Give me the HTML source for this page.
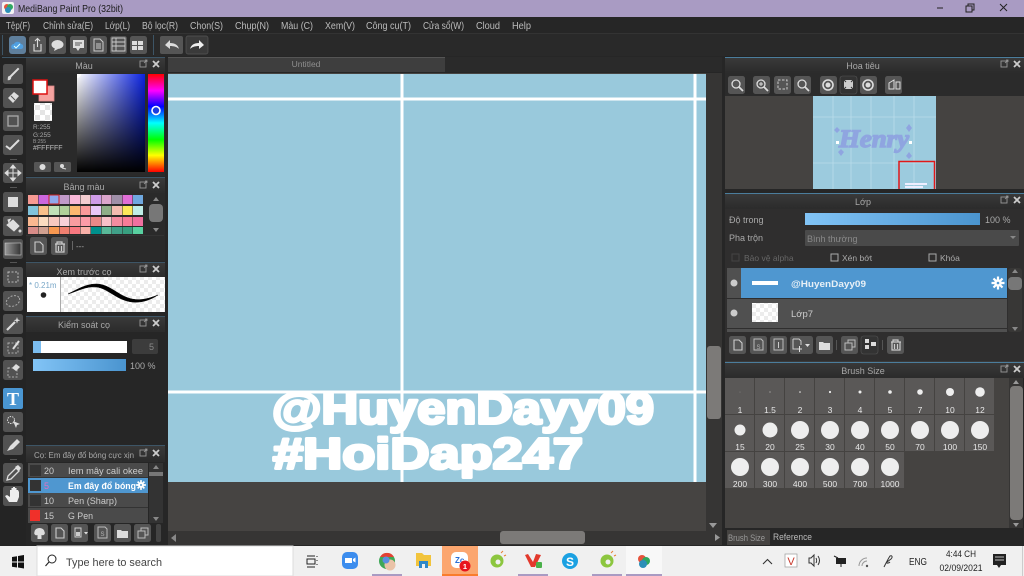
<!DOCTYPE html>
<html lang="vi"><head><meta charset="utf-8"><title>MediBang Paint Pro</title>
<style>
html,body{margin:0;padding:0;width:1024px;height:576px;overflow:hidden;background:#222}
svg{display:block;filter:blur(.3px)}
text{font-family:"Liberation Sans","Noto Sans CJK SC",sans-serif;font-size:9px;fill:#b4b4b4}
.h{fill:#a8a8a8;text-anchor:middle;font-size:9px}
.m{fill:#bcbcbc;font-size:10px}
.w{fill:#e8e8e8;font-size:8.5px;text-anchor:middle}
.t{fill:#222;font-size:9.5px}
</style></head><body>
<svg width="1024" height="576" viewBox="0 0 1024 576" xmlns="http://www.w3.org/2000/svg">
<defs>
<linearGradient id="bar" x1="0" x2="1" y1="0" y2="0"><stop offset="0" stop-color="#82c4f6"/><stop offset="1" stop-color="#4a94cf"/></linearGradient>
<linearGradient id="hd" x1="0" x2="0" y1="0" y2="1"><stop offset="0" stop-color="#3a3a3a"/><stop offset="1" stop-color="#2b2b2b"/></linearGradient>
<linearGradient id="hue" x1="0" x2="0" y1="0" y2="1"><stop offset="0" stop-color="#f00"/><stop offset=".17" stop-color="#f0f"/><stop offset=".33" stop-color="#00f"/><stop offset=".5" stop-color="#0ff"/><stop offset=".67" stop-color="#0f0"/><stop offset=".83" stop-color="#ff0"/><stop offset="1" stop-color="#f00"/></linearGradient>
<linearGradient id="sx" x1="0" x2="1" y1="0" y2="0"><stop offset="0" stop-color="#fff"/><stop offset="1" stop-color="#0a22e0"/></linearGradient>
<linearGradient id="sy" x1="0" x2="0" y1="0" y2="1"><stop offset="0" stop-color="#000" stop-opacity="0"/><stop offset="1" stop-color="#000"/></linearGradient>
<linearGradient id="gr" x1="0" x2="1" y1="0" y2="0"><stop offset="0" stop-color="#999"/><stop offset="1" stop-color="#333"/></linearGradient>
<pattern id="ck" width="10" height="10" patternUnits="userSpaceOnUse"><rect width="10" height="10" fill="#fff"/><rect width="5" height="5" fill="#e4e4e4"/><rect x="5" y="5" width="5" height="5" fill="#e4e4e4"/></pattern>
<pattern id="ck2" width="8" height="8" patternUnits="userSpaceOnUse"><rect width="8" height="8" fill="#fff"/><rect width="4" height="4" fill="#ececec"/><rect x="4" y="4" width="4" height="4" fill="#ececec"/></pattern>
<g id="pn"><rect x="-17" y="-4" width="6" height="6" fill="none" stroke="#999" stroke-width=".9"/><path d="M-13 -2l3-3M-12-5h2v2" stroke="#999" stroke-width=".8" fill="none"/><path d="M-4-4l6 6M2-4l-6 6" stroke="#ccc" stroke-width="1.800"/></g>
<g id="tb"><rect width="20" height="20" rx="2.500" fill="#525252"/></g>
<g id="sb"><rect width="17" height="18" rx="2.500" fill="#555"/></g>
<g id="doc"><path d="M5 4h5l3 3v7H5z" fill="none" stroke="#ccc" stroke-width="1.100"/></g>
<g id="fold"><path d="M3 6h4l1 1h6v7H3z" fill="#ddd"/></g>
<g id="copy"><path d="M4 7h7v7H4zM7 7V4h7v7h-3" fill="none" stroke="#bbb" stroke-width="1"/></g>
<g id="trash"><path d="M4 6h10M6 6V4h5v2M5 6v8h8V6M7.500 8v5M10.500 8v5" fill="none" stroke="#ccc" stroke-width="1.200"/></g>
<g id="mag"><circle cx="7" cy="7" r="4" fill="none" stroke="#ddd" stroke-width="1.300"/><path d="M10 10l4 4" stroke="#ddd" stroke-width="1.800"/></g>
<g id="gear"><circle r="3.800" fill="#fff"/><path d="M0-6.500V6.500M-6.500 0H6.500M-4.500-4.500L4.500 4.500M4.500-4.500L-4.500 4.500" stroke="#fff" stroke-width="2.200"/><circle r="1.300" fill="#4f97d0"/></g>
</defs>

<rect width="1024" height="576" fill="#222"/>

<!-- title bar -->
<rect width="1024" height="17" fill="#a99bc3"/>
<rect x="2" y="2" width="12" height="12" rx="2" fill="#f3f3f3"/>
<circle cx="7" cy="7" r="3" fill="#e6533c"/><circle cx="10" cy="7" r="3" fill="#2fa860"/><circle cx="8" cy="10" r="3" fill="#2c8fb8"/>
<text x="18" y="12" style="fill:#1c1c1c;font-size:10.500px" textLength="105" lengthAdjust="spacingAndGlyphs">MediBang Paint Pro (32bit)</text>
<path d="M937 8h6" stroke="#222" stroke-width="1"/>
<path d="M966 6h6v6h-6zM968 6V4h6v6h-2" fill="none" stroke="#222" stroke-width="1"/>
<path d="M1000 4l7 7M1007 4l-7 7" stroke="#222" stroke-width="1"/>

<!-- menu -->
<rect y="17" width="1024" height="16" fill="#262626"/>
<rect y="33" width="1024" height="1" fill="#333"/>
<text class="m" x="6" y="29" textLength="24" lengthAdjust="spacingAndGlyphs">Tệp(F)</text>
<text class="m" x="43" y="29" textLength="50" lengthAdjust="spacingAndGlyphs">Chỉnh sửa(E)</text>
<text class="m" x="105" y="29" textLength="25" lengthAdjust="spacingAndGlyphs">Lớp(L)</text>
<text class="m" x="142" y="29" textLength="36" lengthAdjust="spacingAndGlyphs">Bộ lọc(R)</text>
<text class="m" x="190" y="29" textLength="33" lengthAdjust="spacingAndGlyphs">Chọn(S)</text>
<text class="m" x="235" y="29" textLength="34" lengthAdjust="spacingAndGlyphs">Chụp(N)</text>
<text class="m" x="281" y="29" textLength="32" lengthAdjust="spacingAndGlyphs">Màu (C)</text>
<text class="m" x="325" y="29" textLength="30" lengthAdjust="spacingAndGlyphs">Xem(V)</text>
<text class="m" x="366" y="29" textLength="45" lengthAdjust="spacingAndGlyphs">Công cụ(T)</text>
<text class="m" x="423" y="29" textLength="41" lengthAdjust="spacingAndGlyphs">Cửa sổ(W)</text>
<text class="m" x="476" y="29" textLength="24" lengthAdjust="spacingAndGlyphs">Cloud</text>
<text class="m" x="512" y="29" textLength="19" lengthAdjust="spacingAndGlyphs">Help</text>

<!-- top toolbar -->
<rect y="34" width="1024" height="22" fill="#292929"/>
<rect x="2" y="35" width="1" height="20" fill="#3d5566"/>
<rect x="153" y="35" width="1" height="20" fill="#3d5566"/>
<rect x="9" y="36" width="17" height="18" rx="3" fill="#5f7f9c"/>
<path d="M12 49c-2-3 0-5 2-5 1-3 6-3 7 0 3 0 3 5 0 5z" fill="#4f9fe0"/><path d="M14 46l2 2 4-4" stroke="#dff" fill="none"/>
<use href="#sb" x="29" y="36"/><path d="M34 44v7h7v-7M37.500 47v-8M35 41l2.500-2.500L40 41" fill="none" stroke="#ddd" stroke-width="1.100"/>
<use href="#sb" x="49" y="36"/><ellipse cx="57.500" cy="44.500" rx="6" ry="4.500" fill="#ddd"/><path d="M55 48l-1 3 4-2" fill="#ddd"/>
<use href="#sb" x="70" y="36"/><path d="M73 40h11v8h-4l-2 3-2-3h-3z" fill="#ddd"/><path d="M75 43h7M75 45h5" stroke="#555"/>
<use href="#sb" x="90" y="36"/><path d="M94 39h6l3 3v9h-9zM96 44h5M96 46h5M96 48h5" fill="none" stroke="#ccc"/>
<use href="#sb" x="110" y="36"/><path d="M112 38h13v13h-13zM116 38v13M112 42h13M112 46h13" fill="none" stroke="#ccc" stroke-width=".9"/>
<use href="#sb" x="130" y="36"/><path d="M132 41h5v4h-5zM138 41h5v4h-5zM132 46h5v4h-5zM138 46h5v4h-5z" fill="#ddd"/>
<rect x="160" y="36" width="23" height="18" rx="2" fill="#555"/><path d="M165 45l5-5v3c5 0 8 2 9 6-2-2-5-3-9-3v3z" fill="#ddd"/>
<rect x="186" y="36" width="22" height="18" rx="2" fill="#3a3a3a" stroke="#555" stroke-width=".7"/><path d="M204 45l-5-5v3c-5 0-8 2-9 6 2-2 5-3 9-3v3z" fill="#eee"/>

<!-- left tool strip -->
<rect y="56" width="26" height="490" fill="#242424"/>
<rect x="2" y="57" width="24" height="1" fill="#3d5566"/>
<g>
<use href="#tb" x="3" y="64"/><path d="M8 80c2 0 3-1 3-3l8-8-1-1-8 8c-2 0-2 2-2 4z" fill="#ddd" stroke="#ddd" stroke-width=".6"/>
<use href="#tb" x="3" y="88"/><path d="M8 98l6-6 5 4-6 7z" fill="#ddd"/><path d="M11 96l4 4" stroke="#555"/>
<use href="#tb" x="3" y="111"/><rect x="8" y="116" width="10" height="10" fill="none" stroke="#aaa" stroke-width="1.300"/>
<use href="#tb" x="3" y="135"/><path d="M6 146l4 3 3-3 6-6" fill="none" stroke="#ddd" stroke-width="2"/>
<rect x="10" y="159" width="7" height="1" fill="#555"/>
<use href="#tb" x="3" y="163"/><path d="M13 166v14M6 173h14M13 165l-2.500 3h5zM13 181l-2.500-3h5zM5 173l3-2.500v5zM21 173l-3-2.500v5z" stroke="#ddd" fill="#ddd"/>
<rect x="10" y="187" width="7" height="1" fill="#555"/>
<use href="#tb" x="3" y="192"/><rect x="8" y="197" width="10" height="10" fill="#ddd"/>
<use href="#tb" x="3" y="216"/><path d="M7 225l6-5 6 6-5 5zM9 223l-1-3 3-1" fill="#ddd" stroke="#ddd"/><circle cx="20" cy="231" r="1.500" fill="#ddd"/>
<use href="#tb" x="3" y="239"/><rect x="5" y="243" width="16" height="12" fill="url(#gr)" stroke="#ccc" stroke-width=".6"/>
<rect x="10" y="262" width="7" height="1" fill="#555"/>
<use href="#tb" x="3" y="267"/><rect x="8" y="272" width="10" height="10" fill="none" stroke="#bbb" stroke-dasharray="2 1.500"/>
<use href="#tb" x="3" y="291"/><ellipse cx="13" cy="301" rx="7" ry="5" transform="rotate(-25 13 301)" fill="none" stroke="#aaa" stroke-dasharray="2 1.500"/>
<use href="#tb" x="3" y="314"/><path d="M7 330l8-8" stroke="#ddd" stroke-width="2.200"/><path d="M17 317l.8 2.500 2.500.8-2.500.8-.8 2.500-.8-2.500-2.500-.8 2.500-.8z" fill="#ddd"/>
<use href="#tb" x="3" y="337"/><rect x="8" y="343" width="10" height="10" fill="none" stroke="#aaa" stroke-dasharray="2 1.500"/><path d="M13 349l6-8" stroke="#ddd" stroke-width="2"/>
<use href="#tb" x="3" y="360"/><rect x="8" y="368" width="9" height="9" fill="none" stroke="#aaa" stroke-dasharray="2 1.500"/><path d="M12 368l4-4 4 3-4 4z" fill="#ddd"/>
<rect x="3" y="388" width="20" height="21" rx="2" fill="#4a96d2"/><text x="13" y="405" style="font-family:'Liberation Serif',serif;font-weight:bold;font-size:18px;fill:#fff;text-anchor:middle">T</text>
<use href="#tb" x="3" y="412"/><circle cx="11" cy="420" r="3.500" fill="none" stroke="#ddd" stroke-dasharray="1.500 1"/><path d="M13 421l7 3-3 1-1 3z" fill="#ddd"/>
<use href="#tb" x="3" y="435"/><path d="M7 451l3-5 7-7 3 3-7 7z" fill="#ddd"/>
<rect x="10" y="459" width="7" height="1" fill="#555"/>
<use href="#tb" x="3" y="463"/><path d="M7 480l1-4 8-8 3 3-8 8z" fill="none" stroke="#ddd" stroke-width="1.300"/><path d="M15 467l3-2 3 3-2 3z" fill="#ddd"/>
<use href="#tb" x="3" y="486"/><path d="M9 502l-4-6 2-1 3 2v-7h1.500v-2h1.500v-1h2v1h1.500v2h1.500l1 2v5l-2 5z" fill="#eee"/>
</g>

<!-- left panels -->
<rect x="26" y="56" width="142" height="490" fill="#262626"/>
<rect x="26" y="57" width="139" height="16" fill="url(#hd)"/>
<rect x="26" y="57" width="139" height="1" fill="#3d5566"/>
<text class="h" x="84" y="69">Màu</text><use href="#pn" x="157" y="65"/>
<rect x="26" y="73" width="139" height="103" fill="#2a2a2a"/>
<rect x="39" y="86" width="15" height="15" fill="#f5a3a0" stroke="#d88" stroke-width=".8"/>
<rect x="33" y="80" width="14" height="14" fill="#fff" stroke="#d11" stroke-width="1.500"/>
<rect x="34" y="103" width="18" height="18" fill="url(#ck)"/>
<text x="33" y="129" style="font-size:6.500px;fill:#aaa">R:255</text>
<text x="33" y="137" style="font-size:6.500px;fill:#aaa">G:255</text>
<text x="33" y="143" style="font-size:5px;fill:#999">B:255</text>
<text x="33" y="150" style="font-size:7px;fill:#bbb">#FFFFFF</text>
<rect x="34" y="162" width="17" height="10" rx="1.500" fill="#555"/><circle cx="42.500" cy="167" r="3" fill="#ddd"/>
<rect x="54" y="162" width="17" height="10" rx="1.500" fill="#555"/><circle cx="62" cy="166" r="2" fill="#ddd"/><path d="M62 168l4 1" stroke="#ddd"/>
<rect x="77" y="74" width="68" height="98" fill="url(#sx)"/>
<rect x="77" y="74" width="68" height="98" fill="url(#sy)"/>
<path d="M77 74h4a4 4 0 0 1-4 4z" fill="#fff"/>
<rect x="148" y="74" width="16" height="98" fill="url(#hue)"/>
<circle cx="156" cy="110.500" r="4" fill="#1a3ce0" stroke="#fff" stroke-width="1.600"/>

<rect x="26" y="177" width="139" height="16" fill="url(#hd)"/>
<rect x="26" y="177" width="139" height="1" fill="#3d5566"/>
<text class="h" x="84" y="190">Bảng màu</text><use href="#pn" x="157" y="186"/>
<rect x="26" y="193" width="139" height="68" fill="#2a2a2a"/>
<g>
<rect x="28" y="195" width="10" height="9" fill="#f79a93"/><rect x="38.500" y="195" width="10" height="9" fill="#cc66dd"/><rect x="49" y="195" width="10" height="9" fill="#8fa8ec" stroke="#c22" stroke-width="1"/><rect x="59.500" y="195" width="10" height="9" fill="#c09ac9"/><rect x="70" y="195" width="10" height="9" fill="#f9b8d9"/><rect x="80.500" y="195" width="10" height="9" fill="#f3ccd0"/><rect x="91" y="195" width="10" height="9" fill="#cf9ce8"/><rect x="101.500" y="195" width="10" height="9" fill="#dba5cc"/><rect x="112" y="195" width="10" height="9" fill="#9f8fa8"/><rect x="122.500" y="195" width="10" height="9" fill="#e06fd6"/><rect x="133" y="195" width="10" height="9" fill="#6fa8e0"/>
<rect x="28" y="206" width="10" height="9" fill="#80c4dc"/><rect x="38.500" y="206" width="10" height="9" fill="#f8c08a"/><rect x="49" y="206" width="10" height="9" fill="#bfe0b8"/><rect x="59.500" y="206" width="10" height="9" fill="#b0d09a"/><rect x="70" y="206" width="10" height="9" fill="#fbb870"/><rect x="80.500" y="206" width="10" height="9" fill="#f99a9a"/><rect x="91" y="206" width="10" height="9" fill="#e8c8f8"/><rect x="101.500" y="206" width="10" height="9" fill="#8fae88"/><rect x="112" y="206" width="10" height="9" fill="#f3bcb0"/><rect x="122.500" y="206" width="10" height="9" fill="#fbe85a"/><rect x="133" y="206" width="10" height="9" fill="#bfeee8"/>
<rect x="28" y="217" width="10" height="9" fill="#fab890"/><rect x="38.500" y="217" width="10" height="9" fill="#fbdcc0"/><rect x="49" y="217" width="10" height="9" fill="#f8c8c0"/><rect x="59.500" y="217" width="10" height="9" fill="#f8d0d8"/><rect x="70" y="217" width="10" height="9" fill="#f89ca0"/><rect x="80.500" y="217" width="10" height="9" fill="#fb9ca8"/><rect x="91" y="217" width="10" height="9" fill="#e88888"/><rect x="101.500" y="217" width="10" height="9" fill="#f8c0c8"/><rect x="112" y="217" width="10" height="9" fill="#f48ca0"/><rect x="122.500" y="217" width="10" height="9" fill="#f87c98"/><rect x="133" y="217" width="10" height="9" fill="#f070a0"/>
<rect x="28" y="227" width="10" height="7" fill="#d88c88"/><rect x="38.500" y="227" width="10" height="7" fill="#d0a090"/><rect x="49" y="227" width="10" height="7" fill="#f89850"/><rect x="59.500" y="227" width="10" height="7" fill="#f08070"/><rect x="70" y="227" width="10" height="7" fill="#f87880"/><rect x="80.500" y="227" width="10" height="7" fill="#f8b0a8"/><rect x="91" y="227" width="10" height="7" fill="#00908c"/><rect x="101.500" y="227" width="10" height="7" fill="#58b898"/><rect x="112" y="227" width="10" height="7" fill="#40a088"/><rect x="122.500" y="227" width="10" height="7" fill="#38a080"/><rect x="133" y="227" width="10" height="7" fill="#58d0a0"/>
</g>
<path d="M156 197l3 4h-6zM156 232l3-4h-6z" fill="#888"/>
<rect x="149" y="204" width="14" height="18" rx="4" fill="#777"/>
<rect x="26" y="235" width="138" height="1" fill="#333"/>
<use href="#sb" x="30" y="237"/><use href="#doc" x="30" y="238"/>
<use href="#sb" x="51" y="237"/><use href="#trash" x="51" y="238"/>
<text x="76" y="249" style="font-size:8px;fill:#aaa">---</text>
<rect x="72" y="241" width="1" height="9" fill="#666"/>

<rect x="26" y="262" width="139" height="16" fill="url(#hd)"/>
<rect x="26" y="262" width="139" height="1" fill="#3d5566"/>
<text class="h" x="84" y="275">Xem trước cọ</text><use href="#pn" x="157" y="270"/>
<rect x="27" y="277" width="138" height="35" fill="url(#ck2)"/>
<rect x="27" y="277" width="34" height="35" fill="#fff"/><rect x="60" y="277" width="1" height="35" fill="#aaa"/>
<text x="29" y="288" style="font-size:8px;fill:#7aa8c8">* 0.21m</text>
<circle cx="43.500" cy="295" r="2.800" fill="#222"/>
<path d="M68 294C78 289 86 284 96 284C110 284 118 296 132 299C142 301 150 298 158 295C150 300 142 303 132 302C116 300 108 288 96 287C86 286 78 291 68 294Z" fill="#000" stroke="#000" stroke-width=".5"/>

<rect x="26" y="316" width="139" height="16" fill="url(#hd)"/>
<rect x="26" y="316" width="139" height="1" fill="#3d5566"/>
<text class="h" x="84" y="328">Kiểm soát cọ</text><use href="#pn" x="157" y="324"/>
<rect x="33" y="341" width="94" height="12" fill="#fff"/><rect x="33" y="341" width="8" height="12" fill="#7bbdf0"/>
<rect x="132" y="339" width="26" height="15" rx="2" fill="#3c3c3c"/><text x="154" y="350" style="font-size:9px;fill:#888;text-anchor:end">5</text>
<rect x="33" y="359" width="93" height="12" fill="url(#bar)"/>
<text x="130" y="369" style="font-size:9px;fill:#aaa">100 %</text>

<rect x="26" y="445" width="139" height="17" fill="url(#hd)"/>
<rect x="26" y="445" width="139" height="1" fill="#3d5566"/>
<text x="34" y="458" style="font-size:8.500px;fill:#a8a8a8" textLength="100" lengthAdjust="spacingAndGlyphs">Cọ: Em đây đổ bóng cực xịn</text><use href="#pn" x="157" y="454"/>
<rect x="28" y="463" width="120" height="60" fill="#4a4a4a"/>
<rect x="28" y="478" width="120" height="15" fill="#4f97d0"/>
<rect x="28" y="477" width="120" height="1" fill="#333"/><rect x="28" y="507" width="120" height="1" fill="#333"/>
<rect x="30" y="465" width="11" height="11" fill="#333"/>
<rect x="30" y="480" width="11" height="11" fill="#333"/>
<rect x="30" y="495" width="11" height="11" fill="#333"/>
<rect x="30" y="510" width="10" height="11" fill="#f0302a"/>
<text x="44" y="474" style="fill:#ccc">20</text><text x="68" y="474" style="fill:#ccc" textLength="75" lengthAdjust="spacingAndGlyphs">Iem mây cali okee</text>
<text x="44" y="489" style="fill:#e070c0">5</text><text x="68" y="489" style="fill:#fff;font-weight:bold" textLength="68" lengthAdjust="spacingAndGlyphs">Em đây đổ bóng</text>
<use href="#gear" x="141" y="485" transform="translate(141 485) scale(.75) translate(-141 -485)"/>
<text x="44" y="504" style="fill:#ccc">10</text><text x="68" y="504" style="fill:#ccc" textLength="49" lengthAdjust="spacingAndGlyphs">Pen (Sharp)</text>
<text x="44" y="519" style="fill:#ccc">15</text><text x="68" y="519" style="fill:#ccc" textLength="25" lengthAdjust="spacingAndGlyphs">G Pen</text>
<rect x="149" y="463" width="14" height="60" fill="#333"/>
<rect x="149" y="472" width="14" height="4" fill="#777"/>
<path d="M156 465l3 4h-6zM156 521l3-4h-6z" fill="#888"/>
<use href="#sb" x="31" y="524"/><path d="M39.500 528c-3 0-5 2-5 4-1 2 1 4 3 3v4h4v-4c3 1 4-2 3-3 0-2-2-4-5-4z" fill="#ddd"/>
<use href="#sb" x="51" y="524"/><use href="#doc" x="51" y="524"/>
<use href="#sb" x="71" y="524"/><path d="M75 528h6v9h-6z" fill="none" stroke="#ccc"/><rect x="76" y="532" width="4" height="4" fill="#ccc"/><path d="M84 532h4l-2 2.500z" fill="#ddd"/>
<use href="#sb" x="94" y="524"/><path d="M98 527h7l2 2v9h-9z" fill="none" stroke="#bbb"/><text x="102.500" y="536" style="font-size:6px;text-anchor:middle">S</text>
<use href="#sb" x="114" y="524"/><use href="#fold" x="114" y="524"/>
<use href="#sb" x="134" y="524"/><use href="#copy" x="134" y="524"/>
<rect x="156" y="524" width="5" height="18" rx="2" fill="#444"/>

<!-- canvas area -->
<rect x="168" y="56" width="557" height="490" fill="#262626"/>
<rect x="168" y="57" width="277" height="15" fill="#3e3e3e"/>
<rect x="168" y="57" width="277" height="1" fill="#555"/>
<text x="306" y="67" style="fill:#8f8f8f;font-size:8.500px;text-anchor:middle">Untitled</text>
<rect x="445" y="57" width="277" height="15" fill="#2a2a2a"/>
<rect x="168" y="73" width="538" height="458" fill="#464442"/>
<rect x="168" y="74" width="538" height="408" fill="#99c9dc"/>
<rect x="168" y="97.500" width="538" height="3" fill="#fff"/>
<rect x="168" y="390.500" width="538" height="3" fill="#fff"/>
<rect x="400.500" y="74" width="3" height="408" fill="#fff"/>
<rect x="693.500" y="74" width="3" height="408" fill="#fff"/>
<text x="272" y="423.500" textLength="382" lengthAdjust="spacingAndGlyphs" style="font-size:44px;font-weight:bold;fill:#fff;stroke:#fff;stroke-width:3px;stroke-linejoin:round">@HuyenDayy09</text>
<text x="273" y="468.500" textLength="310" lengthAdjust="spacingAndGlyphs" style="font-size:44px;font-weight:bold;fill:#fff;stroke:#fff;stroke-width:3px;stroke-linejoin:round">#HoiDap247</text>
<!-- canvas scrollbars -->
<rect x="706" y="73" width="16" height="472" fill="#363534"/>
<rect x="707" y="346" width="14" height="73" rx="3" fill="#7c7a78"/>
<rect x="168" y="531" width="554" height="14" fill="#363534"/>
<path d="M709 523h8l-4 5z" fill="#999"/>
<path d="M715 534v7l5-3.500z" fill="#999"/>
<path d="M176 534v8l-5-4z" fill="#888"/>
<rect x="500" y="531" width="85" height="13" rx="3" fill="#7c7a78"/>

<!-- navigator -->
<rect x="725" y="57" width="299" height="16" fill="url(#hd)"/>
<rect x="725" y="57" width="299" height="1" fill="#4b7d9c"/>
<text class="h" x="863" y="69">Hoa tiêu</text><use href="#pn" x="1018" y="65"/>
<rect x="725" y="73" width="299" height="23" fill="#2b2b2b"/>
<use href="#sb" x="728" y="76"/><use href="#mag" x="729" y="77"/>
<use href="#sb" x="753" y="76"/><use href="#mag" x="754" y="77"/><path d="M759 84h4M761 82v4" stroke="#ddd"/>
<use href="#sb" x="774" y="76"/><path d="M778 80h9v9h-9z" fill="none" stroke="#ccc" stroke-dasharray="2.500 1.500"/>
<use href="#sb" x="794" y="76"/><use href="#mag" x="795" y="77"/>
<use href="#sb" x="820" y="76"/><circle cx="828" cy="85" r="5" fill="none" stroke="#ddd" stroke-width="1.600"/><circle cx="828" cy="85" r="2.500" fill="#ddd"/>
<rect x="840" y="76" width="17" height="18" rx="2.500" fill="#333" stroke="#555" stroke-width=".6"/><path d="M844 80h9v9h-9z" fill="#ccc"/><path d="M843 79l3 3M854 79l-3 3M843 90l3-3M854 90l-3-3" stroke="#333"/>
<use href="#sb" x="860" y="76"/><circle cx="868" cy="85" r="5" fill="none" stroke="#ddd" stroke-width="1.600"/><circle cx="868" cy="85" r="2.500" fill="#ddd"/>
<use href="#sb" x="885" y="76"/><path d="M889 83l5-3v9h-5zM896 82h4v7h-4z" fill="none" stroke="#ddd"/>
<rect x="725" y="96" width="299" height="93" fill="#454341"/>
<rect x="813" y="96" width="123" height="93" fill="#9ccbde"/>
<path d="M833 96v93M851 96v93M871 96v93M894 96v93M914 96v93M813 117h123M813 163h123" stroke="#b9dcea" stroke-width=".8"/>
<text x="874" y="147" textLength="70" lengthAdjust="spacingAndGlyphs" style="font-family:'Liberation Serif',serif;font-size:25px;font-weight:bold;font-style:italic;fill:#8fa5e0;text-anchor:middle;stroke:#8fa5e0;stroke-width:1.400px">Henry</text>
<path d="M837 127l3 3-3 3-3-3zM909 124l3 4-3 4-3-4zM841 149l3 3-3 4-3-4zM909 152l3 4-3 3-3-3z" fill="#8fa5e0"/>
<rect x="836" y="141" width="3" height="3" fill="#fff"/><rect x="909" y="141" width="3" height="3" fill="#fff"/>
<rect x="899" y="161.500" width="35.500" height="30" fill="none" stroke="#e01818" stroke-width="1.500"/>
<rect x="905" y="183" width="22" height="2" fill="#eef"/><rect x="905" y="186" width="18" height="2" fill="#eef"/>
<rect x="725" y="189" width="299" height="4" fill="#262626"/>

<!-- layer -->
<rect x="725" y="193" width="299" height="16" fill="url(#hd)"/>
<rect x="725" y="193" width="299" height="1" fill="#4b7d9c"/>
<text class="h" x="863" y="205">Lớp</text><use href="#pn" x="1018" y="201"/>
<rect x="725" y="209" width="299" height="152" fill="#2f2e2e"/>
<text x="729" y="223" style="fill:#aaa">Độ trong</text>
<rect x="805" y="213" width="175" height="12" fill="url(#bar)"/>
<text x="985" y="223" style="fill:#aaa">100 %</text>
<text x="729" y="241" style="fill:#aaa">Pha trộn</text>
<rect x="805" y="230" width="214" height="16" rx="1" fill="#4a4a4a"/>
<text x="807" y="242" style="fill:#888">Bình thường</text>
<path d="M1010 236h6l-3 3z" fill="#888"/>
<rect x="732" y="254" width="7" height="7" fill="none" stroke="#444"/><text x="744" y="261" style="fill:#666;font-size:8.500px">Bảo vệ alpha</text>
<rect x="831" y="254" width="7" height="7" fill="none" stroke="#aaa"/><text x="842" y="261" style="fill:#aaa;font-size:8.500px">Xén bớt</text>
<rect x="929" y="254" width="7" height="7" fill="none" stroke="#aaa"/><text x="940" y="261" style="fill:#aaa;font-size:8.500px">Khóa</text>
<rect x="727" y="268" width="280" height="30" fill="#505050"/>
<rect x="741" y="268" width="266" height="30" fill="#4f97d0"/>
<circle cx="734" cy="283" r="3.500" fill="#ccc"/>
<rect x="752" y="281" width="26" height="4" fill="#fff"/>
<text x="791" y="287" style="font-weight:bold;font-size:9.500px;fill:#e8f0f6" textLength="75" lengthAdjust="spacingAndGlyphs">@HuyenDayy09</text>
<use href="#gear" x="998" y="283"/>
<rect x="727" y="299" width="280" height="29" fill="#505050"/>
<circle cx="734" cy="313" r="3.500" fill="#ccc"/>
<rect x="752" y="303" width="26" height="19" fill="url(#ck2)"/>
<text x="791" y="317" style="fill:#ccc;font-size:9.500px">Lớp7</text>
<rect x="727" y="329" width="280" height="3" fill="#505050"/>
<rect x="1008" y="268" width="14" height="64" rx="3" fill="#383736"/>
<rect x="1008" y="277" width="14" height="13" rx="4" fill="#777"/>
<path d="M1015 269l3 4h-6zM1015 331l3-4h-6z" fill="#888"/>
<use href="#sb" x="729" y="336"/><use href="#doc" x="729" y="336"/>
<use href="#sb" x="750" y="336"/><path d="M754 339h7l2 2v9h-9z" fill="none" stroke="#bbb"/><text x="758.500" y="349" style="font-size:6px;text-anchor:middle">S</text>
<use href="#sb" x="770" y="336"/><path d="M774 339h9v11h-9z" fill="none" stroke="#bbb"/><path d="M778.500 348v-6" stroke="#ccc"/>
<rect x="790" y="336" width="23" height="18" rx="2.500" fill="#555"/><path d="M793 339h6l2 2v4M793 339v10h5" fill="none" stroke="#ccc"/><path d="M797 349h5M799.500 346v6" stroke="#ddd"/><path d="M805 344h5l-2.500 3z" fill="#ddd"/>
<use href="#sb" x="816" y="336"/><use href="#fold" x="816" y="336"/>
<rect x="836" y="340" width="1" height="10" fill="#555"/>
<use href="#sb" x="841" y="336"/><use href="#copy" x="841" y="336"/>
<rect x="861" y="336" width="17" height="18" rx="2.500" fill="#333" stroke="#555" stroke-width=".6"/><path d="M865 339h4v4h-4zM865 345h4v4h-4zM871 342h5v4h-5z" fill="#ddd"/>
<rect x="882" y="340" width="1" height="10" fill="#555"/>
<use href="#sb" x="887" y="336"/><use href="#trash" x="887" y="336"/>

<!-- brush size -->
<rect x="725" y="361" width="299" height="17" fill="url(#hd)"/>
<rect x="725" y="362" width="299" height="1" fill="#4b7d9c"/>
<text class="h" x="863" y="374">Brush Size</text><use href="#pn" x="1018" y="370"/>
<rect x="725" y="378" width="284" height="150" fill="#454341"/>
<g fill="#5a5857">
<rect x="725" y="378" width="29" height="36"/><rect x="755" y="378" width="29" height="36"/><rect x="785" y="378" width="29" height="36"/><rect x="815" y="378" width="29" height="36"/><rect x="845" y="378" width="29" height="36"/><rect x="875" y="378" width="29" height="36"/><rect x="905" y="378" width="29" height="36"/><rect x="935" y="378" width="29" height="36"/><rect x="965" y="378" width="29" height="36"/>
<rect x="725" y="415" width="29" height="36"/><rect x="755" y="415" width="29" height="36"/><rect x="785" y="415" width="29" height="36"/><rect x="815" y="415" width="29" height="36"/><rect x="845" y="415" width="29" height="36"/><rect x="875" y="415" width="29" height="36"/><rect x="905" y="415" width="29" height="36"/><rect x="935" y="415" width="29" height="36"/><rect x="965" y="415" width="29" height="36"/>
<rect x="725" y="452" width="29" height="36"/><rect x="755" y="452" width="29" height="36"/><rect x="785" y="452" width="29" height="36"/><rect x="815" y="452" width="29" height="36"/><rect x="845" y="452" width="29" height="36"/><rect x="875" y="452" width="29" height="36"/>
</g>
<g fill="#eee">
<circle cx="740" cy="392" r=".3"/><circle cx="770" cy="392" r=".5"/><circle cx="800" cy="392" r=".8"/><circle cx="830" cy="392" r="1.100"/><circle cx="860" cy="392" r="1.500"/><circle cx="890" cy="392" r="1.800"/><circle cx="920" cy="392" r="2.800"/><circle cx="950" cy="392" r="4"/><circle cx="980" cy="392" r="4.800"/>
<circle cx="740" cy="430" r="5.500"/><circle cx="770" cy="430" r="7.500"/><circle cx="800" cy="430" r="9"/><circle cx="830" cy="430" r="9"/><circle cx="860" cy="430" r="9"/><circle cx="890" cy="430" r="9"/><circle cx="920" cy="430" r="9"/><circle cx="950" cy="430" r="9"/><circle cx="980" cy="430" r="9"/>
<circle cx="740" cy="467" r="9"/><circle cx="770" cy="467" r="9"/><circle cx="800" cy="467" r="9"/><circle cx="830" cy="467" r="9"/><circle cx="860" cy="467" r="9"/><circle cx="890" cy="467" r="9"/>
</g>
<text class="w" x="740" y="413">1</text><text class="w" x="770" y="413">1.5</text><text class="w" x="800" y="413">2</text><text class="w" x="830" y="413">3</text><text class="w" x="860" y="413">4</text><text class="w" x="890" y="413">5</text><text class="w" x="920" y="413">7</text><text class="w" x="950" y="413">10</text><text class="w" x="980" y="413">12</text>
<text class="w" x="740" y="450">15</text><text class="w" x="770" y="450">20</text><text class="w" x="800" y="450">25</text><text class="w" x="830" y="450">30</text><text class="w" x="860" y="450">40</text><text class="w" x="890" y="450">50</text><text class="w" x="920" y="450">70</text><text class="w" x="950" y="450">100</text><text class="w" x="980" y="450">150</text>
<text class="w" x="740" y="487">200</text><text class="w" x="770" y="487">300</text><text class="w" x="800" y="487">400</text><text class="w" x="830" y="487">500</text><text class="w" x="860" y="487">700</text><text class="w" x="890" y="487">1000</text>
<rect x="1009" y="378" width="14" height="150" fill="#363534"/>
<rect x="1010" y="386" width="13" height="134" rx="4" fill="#7c7a78"/>
<path d="M1016 380l3 4h-6zM1016 527l3-4h-6z" fill="#999"/>
<rect x="725" y="528" width="299" height="18" fill="#262626"/>
<rect x="727" y="530" width="43" height="15" fill="#454341"/>
<text x="728" y="541" style="fill:#999;font-size:9px" textLength="37" lengthAdjust="spacingAndGlyphs">Brush Size</text>
<text x="773" y="540" style="fill:#bbb;font-size:9px" textLength="39" lengthAdjust="spacingAndGlyphs">Reference</text>

<!-- taskbar -->
<rect y="546" width="1024" height="30" fill="#f0f0f0"/>
<path d="M12 557l5-.8v5.300h-5zM18 556l6-1v6.500h-6zM12 562.500h5v5l-5-.8zM18 562.500h6v6l-6-1z" fill="#111"/>
<rect x="37" y="546" width="256" height="30" fill="#fff"/>
<rect x="37" y="546" width="256" height="30" fill="none" stroke="#ddd"/>
<circle cx="52" cy="559" r="4" fill="none" stroke="#222"/><path d="M49 562l-3.500 4" stroke="#222" stroke-width="1.100"/>
<text x="66" y="566" style="font-size:11px;fill:#444" textLength="96" lengthAdjust="spacingAndGlyphs">Type here to search</text>
<path d="M307 556h8M307 567h8M307 559h8v5h-8zM317 556v1M317 560v1M317 564v1" fill="none" stroke="#222"/>
<rect x="342" y="552" width="16" height="17" rx="5" fill="#3c8dee"/><path d="M345 558h7v5h-7zM353 559l2.500-1.500v5l-2.500-1.500z" fill="#fff"/>
<circle cx="387" cy="561" r="8" fill="#3fa757"/><path d="M380 557a8 8 0 0 1 14 0z" fill="#e34133"/><circle cx="390" cy="565" r="5.500" fill="#eac3a8"/><circle cx="386" cy="560" r="3.500" fill="#5c8fe0"/>
<rect x="372" y="574" width="30" height="2" fill="#a99bc3"/>
<path d="M416 553h6l2 2h7v11h-15z" fill="#f2c43c"/><path d="M419 561h9v7h-9z" fill="#2f88c9"/><rect x="422" y="564" width="3" height="4" fill="#f0f0f0"/>
<rect x="442" y="546" width="36" height="30" fill="#fba66f"/>
<rect x="442" y="574" width="36" height="2" fill="#f97c2c"/>
<rect x="451" y="552" width="17" height="16" rx="5" fill="#fff"/><text x="455" y="563" style="font-size:8px;font-weight:bold;fill:#2a6fd6">Zc</text>
<circle cx="465" cy="566" r="5.500" fill="#e8141c"/><text x="465" y="569" style="font-size:7.500px;font-weight:bold;fill:#fff;text-anchor:middle">1</text>
<circle cx="497" cy="561" r="6.500" fill="#8cc63f"/><circle cx="498" cy="562" r="2.500" fill="#f0f0f0"/><path d="M501 553l2-2M504 556l2-1" stroke="#e88030"/>
<path d="M525 555l3-1 5 8 3-8 5 1-6 12h-4z" fill="#e2392c"/><rect x="536" y="562" width="6" height="6" rx="1" fill="#4ab04a"/>
<rect x="518" y="574" width="30" height="2" fill="#a99bc3"/>
<circle cx="570" cy="561" r="8" fill="#1ba1e2"/><text x="570" y="566" style="font-size:12px;font-weight:bold;fill:#fff;text-anchor:middle">S</text>
<circle cx="607" cy="561" r="6.500" fill="#8cc63f"/><circle cx="608" cy="562" r="2.500" fill="#f0f0f0"/><path d="M611 553l2-2M614 556l2-1" stroke="#e88030"/>
<rect x="592" y="574" width="30" height="2" fill="#a99bc3"/>
<rect x="626" y="546" width="36" height="30" fill="#f8f8f8"/>
<circle cx="642" cy="559" r="4" fill="#e6533c"/><circle cx="646" cy="561" r="4" fill="#2fa860"/><circle cx="643" cy="564" r="4" fill="#2c8fb8"/>
<rect x="626" y="574" width="36" height="2" fill="#a99bc3"/>
<path d="M763 564l4.500-4.500 4.500 4.500" fill="none" stroke="#333" stroke-width="1.100"/>
<rect x="785" y="554" width="12" height="13" fill="#fff" stroke="#999" stroke-width=".7"/><text x="791" y="565" style="font-size:11px;fill:#c8382c;text-anchor:middle">V</text>
<path d="M809 558h2l3-3v11l-3-3h-2z" fill="none" stroke="#333"/><path d="M816 558c1 2 1 3 0 5M818 556c2 3 2 6 0 9" fill="none" stroke="#333"/>
<rect x="836" y="558" width="10" height="6" fill="#222"/><path d="M834 556l4 2M841 564v3" stroke="#222"/>
<path d="M859 566a8 8 0 0 1 8-8M862 566a5 5 0 0 1 5-5" fill="none" stroke="#999"/><circle cx="867" cy="566" r="1.200" fill="#555"/>
<path d="M884 567c2-4 4-8 6-11 2-1 3 1 1 3l-4 3c-1 2 2 1 3 0" fill="none" stroke="#333"/>
<text x="909" y="565" style="font-size:10px;fill:#222" textLength="18" lengthAdjust="spacingAndGlyphs">ENG</text>
<text x="961" y="557" style="font-size:9px;fill:#222;text-anchor:middle" textLength="30" lengthAdjust="spacingAndGlyphs">4:44 CH</text>
<text x="961" y="571" style="font-size:9px;fill:#222;text-anchor:middle" textLength="43" lengthAdjust="spacingAndGlyphs">02/09/2021</text>
<path d="M993 554h13v11h-5l-2 3-2-3h-4z" fill="#222"/><path d="M995 557h9M995 560h9" stroke="#f0f0f0" stroke-width=".8"/>
<rect x="1022" y="546" width="1" height="30" fill="#ccc"/>
</svg>
</body></html>
